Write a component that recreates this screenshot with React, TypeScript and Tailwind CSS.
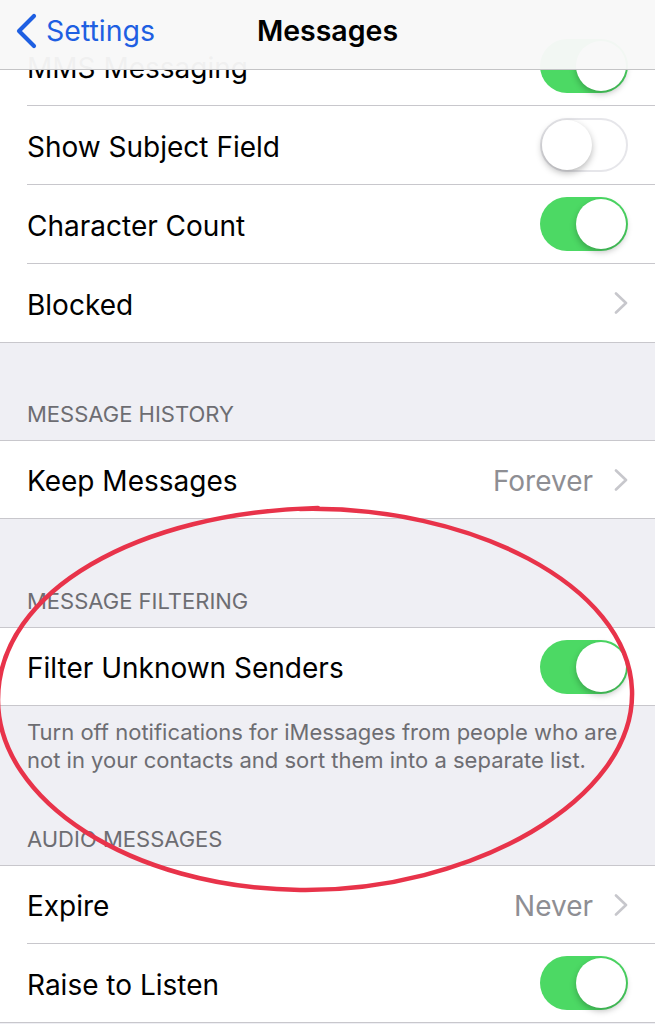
import React from "react";

const font = { fontFamily: "Inter, 'Noto Sans', 'Liberation Sans', sans-serif" };

function Toggle({ on }: { on: boolean }) {
  if (on) {
    return (
      <div className="w-[88px] h-[54px] rounded-full bg-[#4cd964] flex items-center justify-end p-[2px] shrink-0">
        <div className="w-[50px] h-[50px] rounded-full bg-white shadow-[0_3px_6px_rgba(0,0,0,0.25)]" />
      </div>
    );
  }
  return (
    <div className="w-[88px] h-[54px] rounded-full bg-white border-2 border-[#e6e6ea] flex items-center justify-start shrink-0">
      <div className="w-[50px] h-[50px] rounded-full bg-white shadow-[0_3px_7px_rgba(0,0,0,0.28)]" />
    </div>
  );
}

function Chevron() {
  return (
    <svg width="14" height="22" viewBox="0 0 14 22" className="shrink-0">
      <path d="M2 1.5 L12 11 L2 20.5" fill="none" stroke="#c7c7cc" strokeWidth="2.6" strokeLinecap="round" strokeLinejoin="round" />
    </svg>
  );
}

function Row({
  label,
  right,
  last,
  h = "h-[77px]",
}: {
  label: string;
  right: React.ReactNode;
  last?: boolean;
  h?: string;
}) {
  return (
    <div className="bg-white pl-[27px]">
      <div className={`${h} flex items-center justify-between pr-[27px] ${last ? "" : "border-b border-[#c8c7cc]"}`}>
        <span className="text-[28px] text-black leading-none pt-[3px]">{label}</span>
        {right}
      </div>
    </div>
  );
}

function Value({ text }: { text: string }) {
  return (
    <div className="flex items-center gap-[21px]">
      <span className="text-[28px] text-[#8e8e93] leading-none pt-[3px]">{text}</span>
      <Chevron />
    </div>
  );
}

function Header({ text, h }: { text: string; h: string }) {
  return (
    <div className={`${h} flex items-end pl-[27px] pb-[14px]`}>
      <span className="text-[22px] leading-[24px] text-[#6d6d72] uppercase">{text}</span>
    </div>
  );
}

export default function App() {
  return (
    <div className="relative w-[655px] h-[1024px] overflow-hidden bg-[#efeff4]" style={font}>
      {/* Nav bar */}
      <div className="absolute top-0 left-0 right-0 h-[70px] bg-[#f8f8f8]/[0.97] border-b border-[#c4c4c6] z-10 flex items-center pb-[7px]">
        <div className="flex items-center pl-[15px] gap-[8px]">
          <svg width="23" height="36" viewBox="0 0 23 36">
            <path d="M19 3 L4 18 L19 33" fill="none" stroke="#1e5fe2" strokeWidth="4.2" strokeLinecap="round" strokeLinejoin="round" />
          </svg>
          <span className="text-[28.5px] text-[#1e5fe2] leading-none">Settings</span>
        </div>
        <div className="absolute left-0 right-0 top-0 h-[62px] flex items-center justify-center pointer-events-none">
          <span className="text-[28.5px] font-semibold text-black leading-none">Messages</span>
        </div>
      </div>

      <div className="pt-[27px]">
        {/* Group 1 */}
        <div className="border-b border-[#c8c7cc]">
          <Row h="h-[79px]" label="MMS Messaging" right={<Toggle on />} />
          <Row h="h-[79px]" label="Show Subject Field" right={<Toggle on={false} />} />
          <Row h="h-[79px]" label="Character Count" right={<Toggle on />} />
          <Row h="h-[78px]" label="Blocked" right={<Chevron />} last />
        </div>

        <Header text="Message History" h="h-[97px]" />
        <div className="border-y border-[#c8c7cc]">
          <Row label="Keep Messages" right={<Value text="Forever" />} last />
        </div>

        <Header text="Message Filtering" h="h-[108px]" />
        <div className="border-y border-[#c8c7cc]">
          <Row label="Filter Unknown Senders" right={<Toggle on />} last />
        </div>

        <div className="pt-[12px] pl-[27px] pr-[10px] text-[22px] leading-[28px] text-[#6d6d72] whitespace-nowrap">
          Turn off notifications for iMessages from people who are
          <br />
          not in your contacts and sort them into a separate list.
        </div>

        <Header text="Audio Messages" h="h-[91px]" />
        <div className="border-y border-[#c8c7cc]">
          <Row h="h-[78px]" label="Expire" right={<Value text="Never" />} />
          <Row h="h-[78px]" label="Raise to Listen" right={<Toggle on />} last />
        </div>
      </div>

      {/* Red annotation ellipse */}
      <svg
        className="absolute inset-0 pointer-events-none z-20"
        width="655"
        height="1024"
        viewBox="0 0 655 1024"
      >
        <path
          d="M300 509 C470 505 628 585 632 690 C636 800 470 892 300 890 C130 888 -2 800 -2 700 C-2 590 140 512 318 508"
          fill="none"
          stroke="#e8334a"
          strokeWidth="4.5"
          strokeLinecap="round"
        />
      </svg>
    </div>
  );
}
